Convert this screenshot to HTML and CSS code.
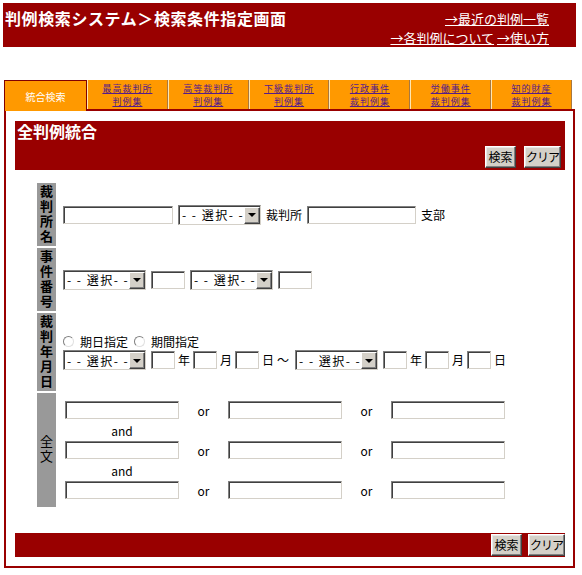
FILE: index.html
```html
<!DOCTYPE html>
<html lang="ja">
<head>
<meta charset="utf-8">
<title>判例検索システム</title>
<link rel="stylesheet" href="styles.css">
</head>
<body>
<div class="page">
  <div class="header">
    <div class="title">判例検索システム＞検索条件指定画面</div>
    <div class="links">
      <div><a href="#">→最近の判例一覧</a></div>
      <div><a href="#">→各判例について</a> <a href="#">→使い方</a></div>
    </div>
  </div>

  <div class="tabs">
    <div class="tab active">統合検索</div>
    <div class="tab"><a href="#"><span>最高裁判所</span><span>判例集</span></a></div>
    <div class="tab"><a href="#"><span>高等裁判所</span><span>判例集</span></a></div>
    <div class="tab"><a href="#"><span>下級裁判所</span><span>判例集</span></a></div>
    <div class="tab"><a href="#"><span>行政事件</span><span>裁判例集</span></a></div>
    <div class="tab"><a href="#"><span>労働事件</span><span>裁判例集</span></a></div>
    <div class="tab"><a href="#"><span>知的財産</span><span>裁判例集</span></a></div>
  </div>

  <div class="panel">
    <div class="bar bar-top">
      <div class="bar-title">全判例統合</div>
      <div class="btns"><button class="btn b1">検索</button><button class="btn b2">クリア</button></div>
    </div>

    <table class="form">
      <tr>
        <th class="lbl h63"><span class="vt">裁判所名</span></th>
        <td class="cell">
          <div class="line">
            <input class="txt w110" type="text">
            <span class="sel"><select><option>- - 選択- -</option></select><span class="arr"></span></span>
            <span class="t">裁判所</span>
            <input class="txt w109" type="text">
            <span class="t">支部</span>
          </div>
        </td>
      </tr>
      <tr>
        <th class="lbl h63"><span class="vt">事件番号</span></th>
        <td class="cell">
          <div class="line">
            <span class="sel"><select><option>- - 選択- -</option></select><span class="arr"></span></span>
            <input class="txt w34" type="text">
            <span class="sel"><select><option>- - 選択- -</option></select><span class="arr"></span></span>
            <input class="txt w34" type="text">
          </div>
        </td>
      </tr>
      <tr>
        <th class="lbl h78"><span class="vt">裁判年月日</span></th>
        <td class="cell">
          <div class="radios">
            <input class="rad" type="radio" name="d"><span class="rt">期日指定</span>
            <input class="rad" type="radio" name="d"><span class="rt">期間指定</span>
          </div>
          <div class="line date">
            <span class="sel"><select><option>- - 選択- -</option></select><span class="arr"></span></span>
            <input class="txt w24" type="text"><span class="t">年</span>
            <input class="txt w24" type="text"><span class="t">月</span>
            <input class="txt w24" type="text"><span class="t">日</span><span class="t">～</span>
            <span class="sel sel2"><select><option>- - 選択- -</option></select><span class="arr"></span></span>
            <input class="txt w24" type="text"><span class="t">年</span>
            <input class="txt w24" type="text"><span class="t">月</span>
            <input class="txt w24" type="text"><span class="t">日</span>
          </div>
        </td>
      </tr>
      <tr>
        <th class="lbl normal h114"><span class="vt">全文</span></th>
        <td class="cell cell-ft">
          <div class="ft">
            <input class="txt w114" type="text"><span class="or">or</span><input class="txt w114" type="text"><span class="or">or</span><input class="txt w114" type="text">
            <div class="and"><span>and</span></div>
            <input class="txt w114" type="text"><span class="or">or</span><input class="txt w114" type="text"><span class="or">or</span><input class="txt w114" type="text">
            <div class="and"><span>and</span></div>
            <input class="txt w114" type="text"><span class="or">or</span><input class="txt w114" type="text"><span class="or">or</span><input class="txt w114" type="text">
          </div>
        </td>
      </tr>
    </table>

    <div class="bar bar-bottom">
      <div class="btns"><button class="btn b1">検索</button><button class="btn b2">クリア</button></div>
    </div>
  </div>
</div>
</body>
</html>
```

FILE: styles.css
```css
* { box-sizing: border-box; }

body {
  margin: 0;
  background: #fff;
  font-family: "Noto Sans CJK JP", sans-serif;
  font-size: 12px;
  color: #000;
}

.page {
  width: 582px;
  padding-top: 3px;
}

/* header */
.header {
  margin-left: 3px;
  width: 573px;
  height: 44px;
  background: #990000;
  color: #fff;
  display: flex;
  justify-content: space-between;
}
.title {
  font-size: 16px;
  font-weight: bold;
  line-height: 20px;
  padding: 5px 0 0 2px;
  letter-spacing: 0.6px;
}
.links {
  font-size: 13px;
  line-height: 19px;
  text-align: right;
  padding: 6px 27px 0 0;
}
.links a { color: #fff; text-decoration: underline; }

/* tabs */
.tabs {
  display: flex;
  align-items: flex-start;
  margin: 33px 0 0 4px;
  width: 568px;
}
.tab {
  flex: 1;
  height: 29px;
  background: #ff9900;
  border-left: 1px solid #ffe6b0;
  border-right: 1px solid #a87840;
  display: flex;
  align-items: center;
  justify-content: center;
  text-align: center;
  font-size: 10px;
  line-height: 13px;
}
.tab a {
  color: #551a8b;
  text-decoration: underline;
  display: flex;
  flex-direction: column;
  align-items: center;
  font-size: 9px;
  letter-spacing: 1px;
}
.tab a span { display: block; height: 13px; line-height: 13px; }
.tab.active {
  flex: 0 0 83px;
  height: 31px;
  margin-bottom: -2px;
  border: 1px solid #800000;
  border-bottom: none;
  color: #fff;
  position: relative;
  z-index: 1;
}

/* panel */
.panel {
  margin-left: 4px;
  width: 571px;
  border: 2px solid #990000;
  padding: 10px 8px 9px 9px;
}

.bar {
  background: #990000;
  display: flex;
}
.bar-top {
  height: 49px;
  flex-direction: column;
  justify-content: space-between;
}
.bar-title {
  color: #fff;
  font-size: 16px;
  font-weight: bold;
  line-height: 20px;
  padding-left: 2px;
}
.btns {
  display: flex;
  gap: 8px;
  align-self: flex-end;
}
.bar-top .btns { padding: 0 4px 2px 0; }
.bar-bottom {
  margin-top: 24px;
  height: 24px;
  justify-content: flex-end;
  align-items: center;
}
.bar-bottom .btns { gap: 6px; align-self: center; }

.btn {
  height: 22px;
  padding: 0;
  font-family: inherit;
  font-size: 12px;
  line-height: 20px;
  color: #000;
  background: #d4d0c8;
  border: 1px solid;
  border-color: #fff #404040 #404040 #fff;
  box-shadow: inset -1px -1px #808080, inset 1px 1px #e8e8e8;
  border-radius: 0;
}
.b1 { width: 31px; }
.b2 { width: 37px; letter-spacing: -1px; }

/* form table */
.form {
  margin: 11px 0 0 20px;
  border-spacing: 2px;
  border-collapse: separate;
}
.lbl {
  width: 19px;
  background: #999999;
  font-size: 13px;
  font-weight: bold;
  padding: 0;
  text-align: center;
  vertical-align: middle;
}
.h63 { height: 63px; }
.h78 { height: 78px; }
.h114 { height: 114px; }
.lbl.normal { font-weight: normal; }
.vt {
  display: inline-block;
  writing-mode: vertical-rl;
  text-orientation: upright;
  letter-spacing: 2px;
  line-height: 19px;
  vertical-align: middle;
}
.cell {
  padding: 0 0 0 5px;
  vertical-align: middle;
}
.cell-ft { padding: 7px 0 7px 7px; }

.line {
  display: flex;
  align-items: center;
  gap: 5px;
}
.t { line-height: 16px; }

.txt {
  height: 18px;
  padding: 0 2px;
  font: inherit;
  border: 1px solid;
  border-color: #808080 #d4d0c8 #d4d0c8 #808080;
  box-shadow: inset 1px 1px #404040;
  background: #fff;
  border-radius: 0;
}
.w110 { width: 110px; }
.w109 { width: 109px; }
.w34 { width: 34px; }
.w24 { width: 24px; }
.w114 { width: 114px; }

.sel {
  position: relative;
  display: inline-block;
  width: 83px;
  height: 20px;
}
.sel select {
  appearance: none;
  -webkit-appearance: none;
  width: 100%;
  height: 100%;
  margin: 0;
  padding: 0 0 0 3px;
  font: inherit;
  letter-spacing: 1.5px;
  color: #000;
  background: #fff;
  border: 1px solid;
  border-color: #808080 #d4d0c8 #d4d0c8 #808080;
  box-shadow: inset 1px 1px #404040;
  border-radius: 0;
}
.arr {
  position: absolute;
  right: 1px;
  top: 2px;
  bottom: 1px;
  width: 16px;
  background: #d4d0c8;
  border: 1px solid;
  border-color: #fff #404040 #404040 #fff;
  box-shadow: inset -1px -1px #808080;
  display: flex;
  align-items: center;
  justify-content: center;
  pointer-events: none;
}
.arr::after {
  content: "";
  border-left: 4px solid transparent;
  border-right: 4px solid transparent;
  border-top: 4px solid #000;
}

.radios {
  display: flex;
  align-items: center;
  height: 16px;
}
.rad {
  appearance: none;
  -webkit-appearance: none;
  width: 11px;
  height: 11px;
  margin: 0 6px 0 0;
  border: 1px solid;
  border-color: #808080 #e0e0e0 #e0e0e0 #808080;
  border-radius: 50%;
  background: #fff;
}
.rt { margin-right: 6px; }

.date {
  gap: 3px;
  height: 21px;
}
.date .sel { margin-right: 2px; }
.date .sel2 { margin-left: 3px; }

.ft {
  display: grid;
  grid-template-columns: 114px 49px 114px 49px 114px;
  grid-auto-rows: 20px;
  align-items: center;
}
.or { text-align: center; }
.and { grid-column: 1 / -1; }
.and span { display: block; width: 114px; text-align: center; }
```
